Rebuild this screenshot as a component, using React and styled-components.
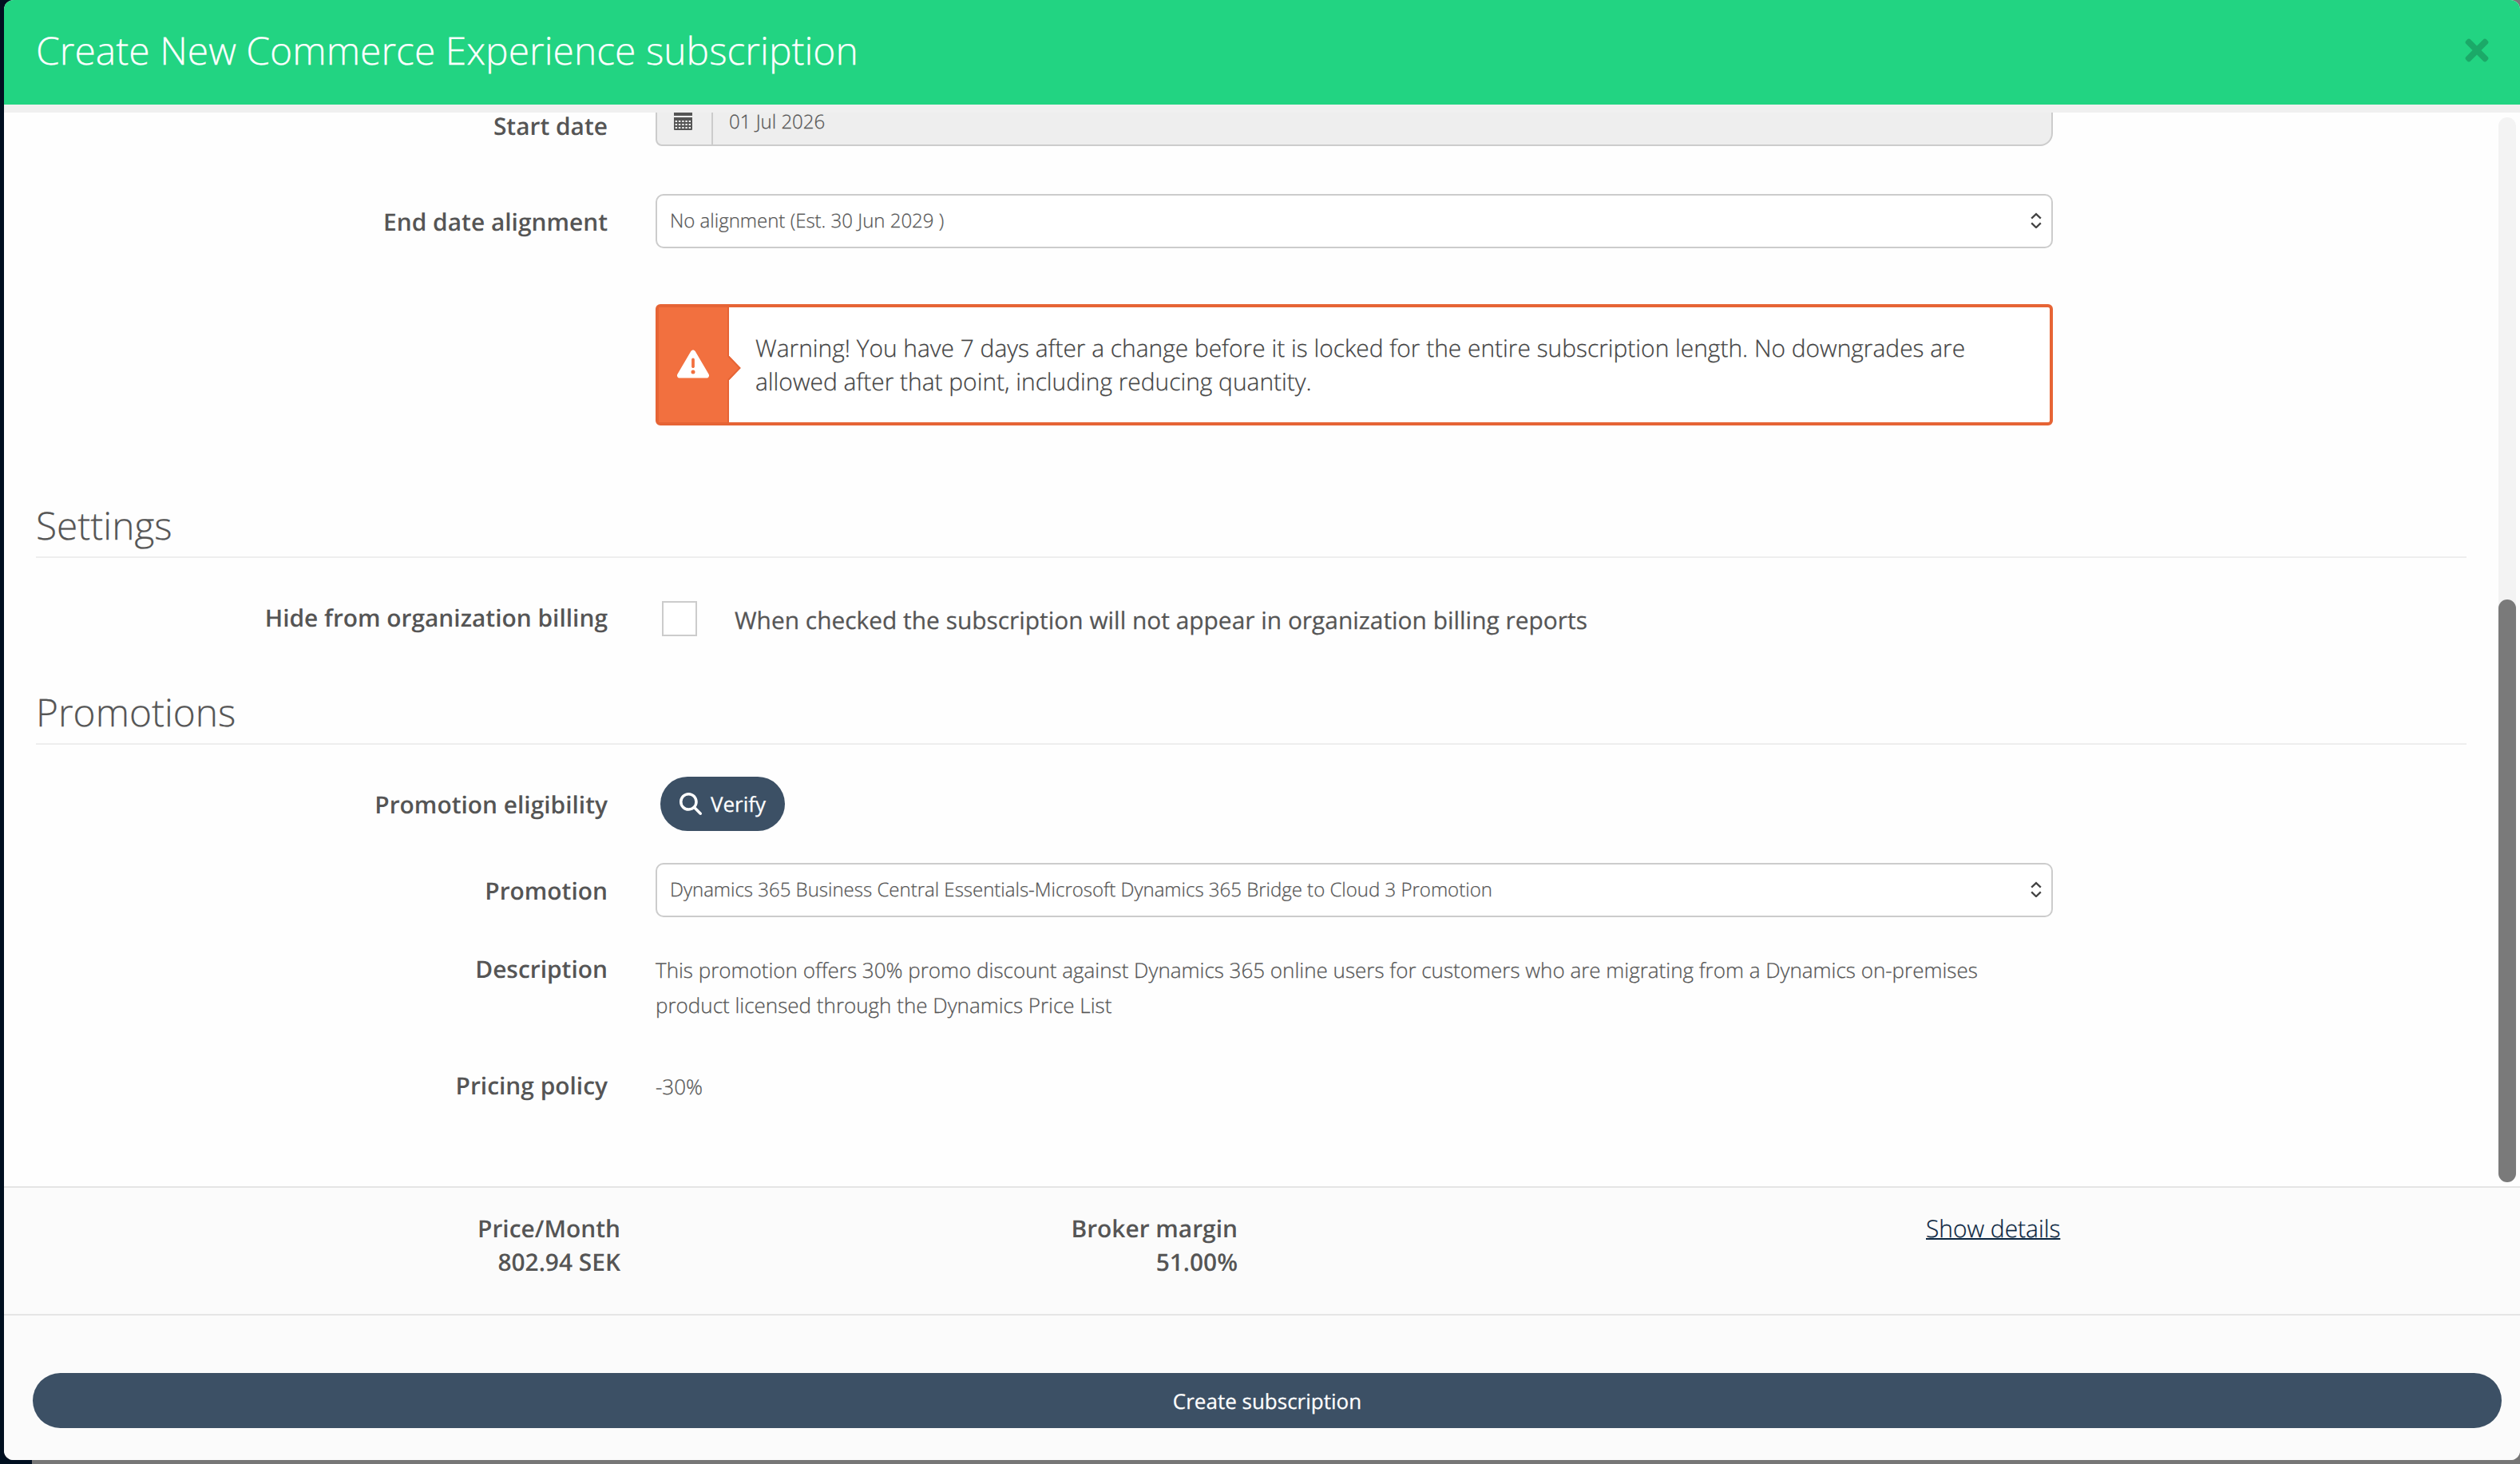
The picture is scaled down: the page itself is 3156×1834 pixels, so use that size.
import React from 'react';
import styled, { createGlobalStyle } from 'styled-components';
import { FaTimes } from 'react-icons/fa';
import { FaMagnifyingGlass, FaTriangleExclamation } from 'react-icons/fa6';

const GlobalStyle = createGlobalStyle`
  * {
    box-sizing: border-box;
  }
  body {
    margin: 0;
    background: #000f20;
    color: #555;
    font-family: 'Open Sans', sans-serif;
    font-weight: 300;
    text-rendering: geometricPrecision;
    -webkit-text-stroke: 0.25px;
    overflow: hidden;
  }
  button {
    text-rendering: inherit;
  }
`;

const Backdrop = styled.div`
  height: 1834px;
  padding-left: 5px;
  background: linear-gradient(to right, #000f20 40px, #777 40px);
`;

const Modal = styled.div`
  display: flex;
  flex-direction: column;
  width: 3151px;
  height: 1829px;
  border-radius: 12px;
  background: #fefefe;
  overflow: hidden;
`;

const Header = styled.header`
  display: flex;
  flex: none;
  align-items: center;
  justify-content: space-between;
  height: 131px;
  padding: 0 33px 6px 40px;
  background: #22d482;
  color: #fff;
`;

const Title = styled.h1`
  margin: 0;
  padding-top: 2px;
  font-size: 48px;
  font-weight: 300;
  line-height: 64px;
`;

const CloseButton = styled.button`
  display: flex;
  padding: 0;
  border: 0;
  background: none;
  color: #1ba968;
`;

const Body = styled.div`
  display: flex;
  flex: none;
  height: 1355px;
  border-top: 10px solid #f0f0f0;
`;

const Form = styled.div`
  flex: 1;
  padding-left: 40px;
  overflow: hidden;
`;

const ScrollTrack = styled.div`
  display: flex;
  flex-direction: column;
  justify-content: flex-end;
  width: 22px;
  height: 1334px;
  margin: 6px 5px 0 40px;
  border-radius: 11px;
  background: #f3f3f3;
`;

const ScrollThumb = styled.div`
  height: 730px;
  border-radius: 11px;
  background: #7a7a7a;
`;

const Row = styled.div`
  display: flex;
  align-items: flex-start;
  margin-top: ${({ $top }) => $top || 0}px;
  height: ${({ $height }) => $height}px;
`;

const Label = styled.label`
  flex: none;
  width: 716px;
  margin: ${({ $top }) => $top || 0}px 60px 0 0;
  font-size: 29.9px;
  font-weight: 600;
  line-height: ${({ $line }) => $line || 42}px;
  text-align: right;
  -webkit-text-stroke: 0;
`;

const DateGroup = styled.div`
  display: flex;
  width: 1750px;
  height: 68px;
  margin-top: -26px;
  border: 2px solid #ccc;
  border-radius: 8px 16px 16px 8px;
  background: #eee;
`;

const DateAddon = styled.div`
  display: flex;
  align-items: flex-end;
  width: 70px;
  padding: 0 0 18px 21px;
  border-right: 2px solid #ccc;
`;

const DateValue = styled.div`
  padding: 24px 20px 0;
  font-size: 24px;
  line-height: 24px;
`;

const Select = styled.div`
  display: flex;
  align-items: center;
  justify-content: space-between;
  width: 1750px;
  height: 68px;
  padding: 0 12px 2px 16px;
  border: 2px solid #ccc;
  border-radius: 10px;
  background: #fff;
  font-size: 24px;
`;

const Warning = styled.div`
  position: relative;
  display: flex;
  width: 1750px;
  height: 152px;
  margin: 70px 0 0 776px;
  border: 4px solid #e66435;
  border-radius: 6px;
  background: #fff;
  color: #444;
`;

const WarningSide = styled.div`
  display: flex;
  align-items: center;
  justify-content: center;
  width: 88px;
  padding-bottom: 3px;
  border-right: 2px solid #e66435;
  background: #f2703f;
  color: #fff;
`;

const WarningArrow = styled.svg`
  position: absolute;
  left: 86px;
  top: 61px;
`;

const WarningText = styled.p`
  margin: 30px 0 0 33px;
  font-size: 29.9px;
  line-height: 42px;
`;

const Section = styled.h2`
  height: 70px;
  margin: ${({ $top }) => $top}px 0 0;
  border-bottom: 2px solid #eee;
  font-size: 47.84px;
  font-weight: 300;
  line-height: 60px;
`;

const Checkbox = styled.span`
  width: 44px;
  height: 44px;
  margin: 0 47px 0 8px;
  border: 2px solid #ccc;
  background: #fff;
`;

const CheckText = styled.span`
  padding-top: 3px;
  font-size: 29.9px;
  font-weight: 400;
  line-height: 42px;
`;

const VerifyButton = styled.button`
  display: flex;
  align-items: center;
  gap: 11px;
  width: 156px;
  height: 68px;
  margin-left: 6px;
  padding: 0 0 0 24px;
  border: 0;
  border-radius: 34px;
  background: #3c5065;
  color: #fff;
  font-family: inherit;
  font-size: 26px;
`;

const Value = styled.div`
  width: 1750px;
  font-size: 26px;
  line-height: 44px;
`;

const Summary = styled.div`
  display: flex;
  flex: none;
  height: 160px;
  padding-top: 30px;
  border-top: 2px solid #e5e5e5;
  background: #fbfbfb;
  font-size: 29.9px;
  line-height: 42px;
`;

const Total = styled.div`
  width: ${({ $width }) => $width}px;
  font-weight: 600;
  text-align: right;
  -webkit-text-stroke: 0;
`;

const DetailsLink = styled.a`
  margin-left: 862px;
  color: #0a2540;
  text-decoration: underline;
  text-decoration-thickness: 2px;
`;

const Footer = styled.footer`
  flex: 1;
  padding: 72px 23px 0 36px;
  border-top: 2px solid #e5e5e5;
  background: #fbfbfb;
`;

const CreateButton = styled.button`
  display: block;
  width: 100%;
  height: 69px;
  border: 0;
  border-radius: 35px;
  background: #3c5065;
  color: #fff;
  font-family: inherit;
  font-size: 26px;
`;

const dotColumns = [1.7, 5.9, 10.2, 14.4, 18.6];
const dotRows = [10, 14, 18];

const CalendarIcon = () => (
  <svg width="23" height="22" viewBox="0 0 23 22" fill="#555">
    <path d="M0 0h23v4H0zM0 6h23v15a1 1 0 0 1-1 1H1a1 1 0 0 1-1-1z" />
    {dotRows.map((y) =>
      dotColumns.map((x) => <rect key={`${x}-${y}`} x={x} y={y} width="2.4" height="2" fill="#eee" />)
    )}
  </svg>
);

const SelectArrows = () => (
  <svg width="14" height="20" viewBox="0 0 14 20" fill="none" stroke="#444" strokeWidth="2.300">
    <path d="M1.200 7.700 7 2.100l5.800 5.600M1.200 13.400 7 19l5.800-5.600" />
  </svg>
);

const App = () => (
  <>
    <GlobalStyle />
    <Backdrop>
      <Modal>
        <Header>
          <Title>Create New Commerce Experience subscription</Title>
          <CloseButton>
            <FaTimes size={42} />
          </CloseButton>
        </Header>
        <Body>
          <Form>
            <Row $height={42}>
              <Label $line={34}>Start date</Label>
              <DateGroup>
                <DateAddon><CalendarIcon /></DateAddon>
                <DateValue>01 Jul 2026</DateValue>
              </DateGroup>
            </Row>
            <Row $height={68} $top={60}>
              <Label $top={14}>End date alignment</Label>
              <Select>
                No alignment (Est. 30 Jun 2029 )
                <SelectArrows />
              </Select>
            </Row>
            <Warning>
              <WarningSide><FaTriangleExclamation size={40} /></WarningSide>
              <WarningArrow width="18" height="30" viewBox="0 0 18 30">
                <path d="M0 0h2l14 15L2 30H0z" fill="#f2703f" />
                <path d="M1 0l14.500 15L1 30" fill="none" stroke="#e66435" strokeWidth="2" />
              </WarningArrow>
              <WarningText>
                Warning! You have 7 days after a change before it is locked for the entire subscription length. No downgrades are<br />
                allowed after that point, including reducing quantity.
              </WarningText>
            </Warning>
            <Section $top={96}>Settings</Section>
            <Row $height={44} $top={54}>
              <Label>Hide from organization billing</Label>
              <Checkbox />
              <CheckText>When checked the subscription will not appear in organization billing reports</CheckText>
            </Row>
            <Section $top={66}>Promotions</Section>
            <Row $height={68} $top={40}>
              <Label $top={14}>Promotion eligibility</Label>
              <VerifyButton>
                <FaMagnifyingGlass size={28} />
                Verify
              </VerifyButton>
            </Row>
            <Row $height={68} $top={40}>
              <Label $top={14}>Promotion</Label>
              <Select>
                Dynamics 365 Business Central Essentials-Microsoft Dynamics 365 Bridge to Cloud 3 Promotion
                <SelectArrows />
              </Select>
            </Row>
            <Row $height={90} $top={44}>
              <Label>Description</Label>
              <Value>
                This promotion offers 30% promo discount against Dynamics 365 online users for customers who are migrating from a Dynamics on-premises<br />
                product licensed through the Dynamics Price List
              </Value>
            </Row>
            <Row $height={44} $top={56}>
              <Label>Pricing policy</Label>
              <Value>-30%</Value>
            </Row>
          </Form>
          <ScrollTrack>
            <ScrollThumb />
          </ScrollTrack>
        </Body>
        <Summary>
          <Total $width={772}>Price/Month<br />802.94 SEK</Total>
          <Total $width={773}>Broker margin<br />51.00%</Total>
          <DetailsLink>Show details</DetailsLink>
        </Summary>
        <Footer>
          <CreateButton>Create subscription</CreateButton>
        </Footer>
      </Modal>
    </Backdrop>
  </>
);

export default App;
